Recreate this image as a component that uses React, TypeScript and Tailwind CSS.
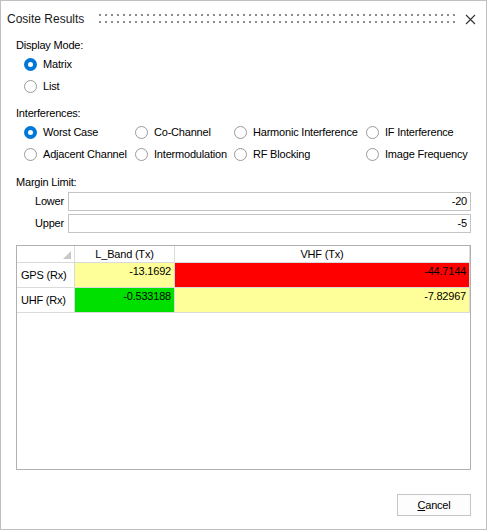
import React from "react";

const font = { fontFamily: '"Liberation Sans", Arial, sans-serif' };

function Radio({ checked, label }: { checked?: boolean; label: string }) {
  return (
    <div className="flex items-center h-[22px]">
      {checked ? (
        <span className="w-[13px] h-[13px] rounded-full bg-[#0078d7] flex items-center justify-center shrink-0">
          <span className="w-[5px] h-[5px] rounded-full bg-white" />
        </span>
      ) : (
        <span className="w-[13px] h-[13px] rounded-full border border-[#9a9a9a] bg-white shrink-0" />
      )}
      <span className="ml-[6px] whitespace-nowrap">{label}</span>
    </div>
  );
}

function LimitRow({ label, value }: { label: string; value: string }) {
  return (
    <div className="flex items-center h-[19px]">
      <span className="w-[49px] text-right pr-[1px]">{label}</span>
      <div className="ml-[3px] flex-1 h-[19px] border border-[#c4c4c4] bg-white flex items-center justify-end pr-[3px]">
        {value}
      </div>
    </div>
  );
}

export default function App() {
  return (
    <div
      className="w-[487px] h-[530px] border border-[#c0c0c0] bg-white text-[11px] tracking-[-0.2px] text-black flex flex-col"
      style={font}
    >
      {/* title bar */}
      <div className="h-[36px] flex items-center pl-[6px] pr-[10px] shrink-0">
        <span className="text-[12px] tracking-normal text-[#1a1a1a]">Cosite Results</span>
        <svg className="ml-[15px] flex-1 h-[10px]" height="10">
          <defs>
            <pattern id="grip" width="6" height="7" patternUnits="userSpaceOnUse">
              <rect x="0" y="0" width="2" height="2" fill="#8c8c8c" />
            </pattern>
          </defs>
          <rect x="0" y="0" width="100%" height="9" fill="url(#grip)" />
        </svg>
        <svg className="ml-[8px]" width="11" height="11" viewBox="0 0 11 11">
          <path d="M1 1 L10 10 M10 1 L1 10" stroke="#333" strokeWidth="1.1" />
        </svg>
      </div>

      <div className="flex-1 flex flex-col px-[15px]">
        <div className="h-[16px] flex items-center">Display Mode:</div>
        <div className="pl-[8px]">
          <Radio checked label="Matrix" />
          <Radio label="List" />
        </div>

        <div className="mt-[8px] h-[16px] flex items-center">Interferences:</div>
        <div className="pl-[8px] grid grid-cols-[111px_99px_132px_1fr]">
          <Radio checked label="Worst Case" />
          <Radio label="Co-Channel" />
          <Radio label="Harmonic Interference" />
          <Radio label="IF Interference" />
          <Radio label="Adjacent Channel" />
          <Radio label="Intermodulation" />
          <Radio label="RF Blocking" />
          <Radio label="Image Frequency" />
        </div>

        <div className="mt-[9px] h-[16px] flex items-center">Margin Limit:</div>
        <div className="mt-[2px] flex flex-col gap-[3px]">
          <LimitRow label="Lower" value="-20" />
          <LimitRow label="Upper" value="-5" />
        </div>

        {/* results grid */}
        <div className="mt-[12px] h-[225px] border border-[#b0b0b0] bg-white">
          <div className="grid grid-cols-[58px_100px_295px] grid-rows-[17px_25px_25px]">
            <div className="relative border-r border-b border-[#dadada]">
              <svg className="absolute right-[3px] bottom-[3px]" width="8" height="8" viewBox="0 0 8 8">
                <path d="M8 0 L8 8 L0 8 Z" fill="#c8c8c8" />
              </svg>
            </div>
            <div className="border-r border-b border-[#dadada] flex items-center justify-center">L_Band (Tx)</div>
            <div className="border-r border-b border-[#dadada] flex items-center justify-center">VHF (Tx)</div>

            <div className="border-r border-b border-[#dadada] flex items-center pl-[4px]">GPS (Rx)</div>
            <div className="border-r border-b border-[#dadada] bg-[#ffff99] text-right pr-[3px] pt-[2px] leading-[13px]">-13.1692</div>
            <div className="border-r border-b border-[#dadada] bg-[#ff0000] text-right pr-[3px] pt-[2px] leading-[13px]">-44.7144</div>

            <div className="border-r border-b border-[#dadada] flex items-center pl-[4px]">UHF (Rx)</div>
            <div className="border-r border-b border-[#dadada] bg-[#00e000] text-right pr-[3px] pt-[2px] leading-[13px]">-0.533188</div>
            <div className="border-r border-b border-[#dadada] bg-[#ffff99] text-right pr-[3px] pt-[2px] leading-[13px]">-7.82967</div>
          </div>
        </div>

        <div className="mt-[24px] flex justify-end">
          <button className="w-[74px] h-[22px] border border-[#c4c4c4] bg-[#fdfdfd] flex items-center justify-center">
            <span>
              <span className="underline">C</span>ancel
            </span>
          </button>
        </div>
      </div>
    </div>
  );
}
